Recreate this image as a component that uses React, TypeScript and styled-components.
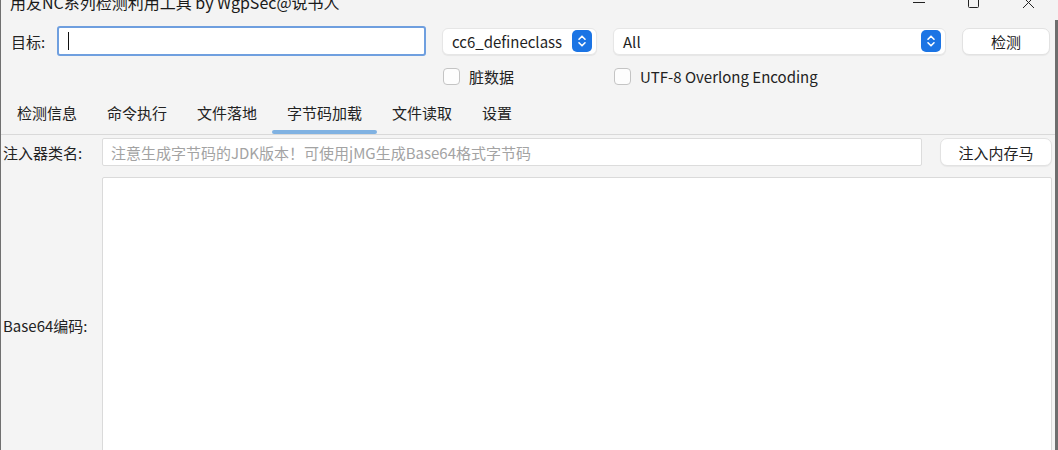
import React from "react";
import styled, { createGlobalStyle } from "styled-components";

const Global = createGlobalStyle`
  html, body { margin: 0; padding: 0; background: #f4f4f4; }
  body { font-family: "Noto Sans CJK SC", "Noto Sans", sans-serif; color: #1f1f1f; }
  * { box-sizing: border-box; }
`;

const Window = styled.div`
  width: 1058px;
  height: 450px;
  overflow: hidden;
  background: #f4f4f4;
  display: flex;
  flex-direction: column;
  border-left: 1px solid #707070;
`;

const TitleBar = styled.div`
  height: 20px;
  flex: none;
  display: flex;
  align-items: flex-start;
  overflow: hidden;
  background: #f3f3f3;
`;

const Title = styled.div`
  margin: -9px 0 0 9px;
  font-size: 16px;
  line-height: 22px;
  color: #1a1a1a;
  flex: 1;
  white-space: nowrap;
`;

const Controls = styled.div`
  display: flex;
  align-items: flex-start;
  margin-top: -3px;
  padding-right: 2px;
`;

const CtrlBtn = styled.div`
  width: 55px;
  display: flex;
  justify-content: center;
`;

const Body = styled.div`
  flex: 1;
  display: flex;
  flex-direction: column;
  border-right: 3px solid #6e6e6e;
`;

const TopGrid = styled.div`
  display: grid;
  grid-template-columns: 30px 369px 155px 333px 88px;
  grid-template-rows: 30px 24px;
  column-gap: 16px;
  row-gap: 8px;
  padding: 6px 0 0 10px;
  align-items: center;
`;

const Label = styled.div`
  font-size: 15px;
  white-space: nowrap;
  color: #222;
`;

const FocusInput = styled.div`
  height: 30px;
  background: #fff;
  border: 2px solid #6f9fdf;
  border-radius: 3px;
  display: flex;
  align-items: center;
  padding-left: 9px;
`;

const Caret = styled.span`
  width: 1px;
  height: 18px;
  background: #111;
`;

const Select = styled.div`
  height: 27px;
  background: #fff;
  border: 1px solid #e6e6e6;
  border-radius: 6px;
  box-shadow: 0 1px 1px rgba(0, 0, 0, 0.06);
  display: flex;
  align-items: center;
  justify-content: space-between;
  padding: 0 4px 0 9px;
  font-size: 15px;
  color: #1f1f1f;
`;

const Stepper = styled.div`
  width: 20px;
  height: 22px;
  border-radius: 5px;
  background: #1b74e4;
  display: flex;
  align-items: center;
  justify-content: center;
`;

const Button = styled.div<{ $h?: number }>`
  height: ${(p) => p.$h ?? 27}px;
  background: #fff;
  border: 1px solid #e2e2e2;
  border-radius: 7px;
  box-shadow: 0 1px 1px rgba(0, 0, 0, 0.05);
  display: flex;
  align-items: center;
  justify-content: center;
  font-size: 15px;
  color: #222;
`;

const Check = styled.label<{ $col: number; $shift: number }>`
  grid-column: ${(p) => p.$col};
  grid-row: 2;
  display: flex;
  align-items: center;
  gap: 9px;
  padding-left: ${(p) => p.$shift}px;
  font-size: 15px;
  color: #222;
  white-space: nowrap;
`;

const Box = styled.span`
  width: 17px;
  height: 17px;
  border: 1px solid #c4c4c4;
  border-radius: 4px;
  background: #fdfdfd;
`;

const Tabs = styled.div`
  margin-top: 7px;
  height: 40px;
  display: flex;
  padding-left: 1px;
  border-bottom: 1px solid #d9d9d9;
`;

const Tab = styled.div<{ $active?: boolean }>`
  position: relative;
  padding: 0 15px 4px;
  display: flex;
  align-items: center;
  font-size: 15px;
  color: #222;
  &::after {
    content: "";
    display: ${(p) => (p.$active ? "block" : "none")};
    position: absolute;
    left: 0;
    right: 0;
    bottom: 0;
    height: 4px;
    border-radius: 2px;
    background: #80b2e2;
  }
`;

const Form = styled.div`
  display: grid;
  grid-template-columns: 81px 1fr 112px;
  grid-template-rows: 28px 296px;
  column-gap: 18px;
  row-gap: 11px;
  padding: 3px 3px 0 2px;
  align-items: center;
`;

const TextInput = styled.div`
  height: 28px;
  background: #fff;
  border: 1px solid #dcdcdc;
  border-radius: 2px;
  display: flex;
  align-items: center;
  padding-left: 8px;
  font-size: 15px;
  color: #a3a3a3;
  white-space: nowrap;
  overflow: hidden;
`;

const TextArea = styled.div`
  grid-column: 2 / 4;
  align-self: stretch;
  background: #fff;
  border: 1px solid #dadada;
  border-radius: 2px;
`;

const StepIcon = () => (
  <svg width="10" height="14" viewBox="0 0 10 14" fill="none">
    <path d="M2 5.2 L5 2.2 L8 5.2" stroke="#fff" strokeWidth="1.6" strokeLinecap="round" strokeLinejoin="round" />
    <path d="M2 8.8 L5 11.8 L8 8.8" stroke="#fff" strokeWidth="1.6" strokeLinecap="round" strokeLinejoin="round" />
  </svg>
);

export default function App() {
  const tabs = ["检测信息", "命令执行", "文件落地", "字节码加载", "文件读取", "设置"];
  return (
    <>
      <Global />
      <Window>
        <TitleBar>
          <Title>用友NC系列检测利用工具 by WgpSec@说书人</Title>
          <Controls>
            <CtrlBtn>
              <svg width="14" height="10" viewBox="0 0 14 10">
                <path d="M1 5.5 H13" stroke="#222" strokeWidth="1" />
              </svg>
            </CtrlBtn>
            <CtrlBtn>
              <svg width="14" height="14" viewBox="0 0 14 14">
                <rect x="1.5" y="0.5" width="10" height="10" rx="1" fill="none" stroke="#222" strokeWidth="1" />
              </svg>
            </CtrlBtn>
            <CtrlBtn>
              <svg width="14" height="14" viewBox="0 0 14 14">
                <path d="M1 0 L12 11 M12 0 L1 11" stroke="#222" strokeWidth="1" />
              </svg>
            </CtrlBtn>
          </Controls>
        </TitleBar>
        <Body>
          <TopGrid>
            <Label>目标:</Label>
            <FocusInput>
              <Caret />
            </FocusInput>
            <Select>
              cc6_defineclass
              <Stepper>
                <StepIcon />
              </Stepper>
            </Select>
            <Select>
              All
              <Stepper>
                <StepIcon />
              </Stepper>
            </Select>
            <Button>检测</Button>
            <Check $col={3} $shift={1}>
              <Box />
              脏数据
            </Check>
            <Check $col={4} $shift={1}>
              <Box />
              UTF-8 Overlong Encoding
            </Check>
          </TopGrid>
          <Tabs>
            {tabs.map((t) => (
              <Tab key={t} $active={t === "字节码加载"}>
                {t}
              </Tab>
            ))}
          </Tabs>
          <Form>
            <Label>注入器类名:</Label>
            <TextInput>注意生成字节码的JDK版本！可使用jMG生成Base64格式字节码</TextInput>
            <Button $h={28}>注入内存马</Button>
            <Label>Base64编码:</Label>
            <TextArea />
          </Form>
        </Body>
      </Window>
    </>
  );
}
